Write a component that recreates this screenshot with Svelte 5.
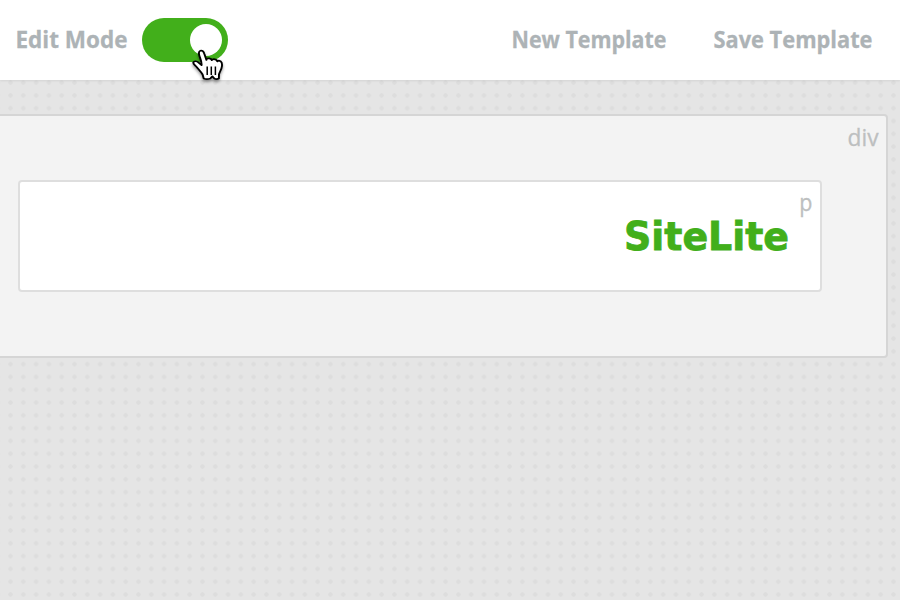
<script>
  let editMode = $state(true);
  const actions = [
    { label: 'New Template', width: 154 },
    { label: 'Save Template', width: 158 }
  ];
</script>

{#snippet label(text, width)}
  <svg class="label" {width} height="32" viewBox="0 0 {width} 32">
    <text x="-0.5" y="24" textLength={width + 1} lengthAdjust="spacingAndGlyphs">{text}</text>
  </svg>
{/snippet}

<div class="app">
  <header>
    <div class="mode">
      {@render label('Edit Mode', 111)}
      <button class="toggle" class:on={editMode} aria-label="Edit Mode" onclick={() => (editMode = !editMode)}>
        <span class="knob"></span>
      </button>
    </div>
    <nav>
      {#each actions as action}
        {@render label(action.label, action.width)}
      {/each}
    </nav>
  </header>

  <main>
    <section class="block outer">
      <svg class="tag" width="32" height="32">
        <text x="0.5" y="24" textLength="31" lengthAdjust="spacingAndGlyphs">div</text>
      </svg>
      <div class="block inner">
        <svg class="tag" width="14" height="32">
          <text x="0.3" y="23" textLength="13.2" lengthAdjust="spacingAndGlyphs">p</text>
        </svg>
        <svg class="brand" width="166" height="48">
          <text x="0" y="37.7" textLength="165" lengthAdjust="spacingAndGlyphs">SiteLite</text>
        </svg>
      </div>
    </section>
  </main>

  <svg class="cursor" width="36" height="38" viewBox="0 0 36 38">
    <path
      transform="translate(-0.4 0) scale(1.13 1)"
      d="M11.5 27.5 C10 24.5 8.2 22.6 6.6 20.4 C4.8 18 2.8 17.2 3.3 15.4 C4 13.6 6.4 14.1 8 15.6 L10.6 18.2 C10.9 15 9.5 11.8 8.7 9 C7.9 6 7.9 4.3 9.5 3.7 C11.2 3.1 12.4 4.3 13.1 7 L14.9 13 C15 11.6 16.2 11.2 17.4 11.4 C18.7 11.6 19.5 12.3 19.7 13.2 C20.2 12.2 21.4 12 22.6 12.4 C23.7 12.7 24.4 13.5 24.5 14.5 C25.2 13.7 26.5 13.6 27.4 14.3 C28.8 15.3 28.9 17 28.6 19.3 C28.3 22.7 26.5 24.6 26 27.5 L25.9 31.5 C24.8 32.1 22.8 32 21.8 31.4 L20.1 29.4 L18.3 31.5 C16.6 32.2 14 32.2 12.5 31.5 Z"
      fill="#fff" stroke="#000" stroke-width="1.7" stroke-linejoin="round"
    />
    <path d="M17.2 19.5V28M21.3 19.5V28M25.4 19.5V28" stroke="#000" stroke-width="1.5" />
  </svg>
</div>

<style>
  :global(body) { margin: 0; overflow: hidden; }
  .app {
    position: relative;
    display: flex;
    flex-direction: column;
    width: 900px;
    height: 600px;
    overflow: hidden;
    background: #e5e5e5;
    font-family: "Open Sans", "Noto Sans", sans-serif;
  }
  header {
    box-sizing: border-box;
    display: flex;
    align-items: center;
    justify-content: space-between;
    height: 80px;
    flex: none;
    padding: 0 28px 0 16px;
    background: #fff;
    box-shadow: 0 1px 2px rgba(0, 0, 0, 0.08);
    z-index: 1;
  }
  .mode { display: flex; align-items: center; gap: 15px; }
  nav { display: flex; gap: 48px; }
  svg { display: block; overflow: visible; flex: none; }
  .label {
    font-size: 24px;
    font-weight: 700;
    fill: #adb3b6;
    stroke: #adb3b6;
    stroke-width: 0.3px;
  }
  .toggle {
    display: flex;
    align-items: center;
    width: 86px;
    height: 44px;
    padding: 0 6px;
    border: 0;
    border-radius: 22px;
    background: #bbb;
  }
  .toggle.on { justify-content: flex-end; background: #42af1b; }
  .knob { width: 32px; height: 32px; border-radius: 50%; background: #fff; }
  main {
    flex: 1;
    padding-top: 34px;
    background-image: radial-gradient(circle, #dddddd 1.8px, transparent 2.7px);
    background-size: 12.8px 12.8px;
    background-position: 4.1px -3.8px;
  }
  .block { position: relative; box-sizing: border-box; border-radius: 4px; }
  .outer {
    width: 892px;
    height: 244px;
    margin-left: -4px;
    padding: 64px 64px 64px 20px;
    background: #f3f3f3;
    border: 2px solid #d5d5d5;
  }
  .inner {
    display: flex;
    align-items: center;
    justify-content: flex-end;
    height: 112px;
    padding-right: 30px;
    background: #fff;
    border: 2px solid #dedede;
  }
  .tag {
    position: absolute;
    top: 6px;
    right: 7px;
    font-size: 23.5px;
    fill: #bdbfc0;
    stroke: #bdbfc0;
    stroke-width: 0.3px;
  }
  .brand {
    font-family: "DejaVu Sans", Verdana, sans-serif;
    font-size: 38.5px;
    font-weight: 700;
    fill: #42af1b;
    stroke: #42af1b;
    stroke-width: 0.8px;
  }
  .cursor {
    position: absolute;
    left: 190px;
    top: 47px;
    z-index: 2;
    filter: drop-shadow(0 2px 1.5px rgba(0, 0, 0, 0.4));
  }
</style>
